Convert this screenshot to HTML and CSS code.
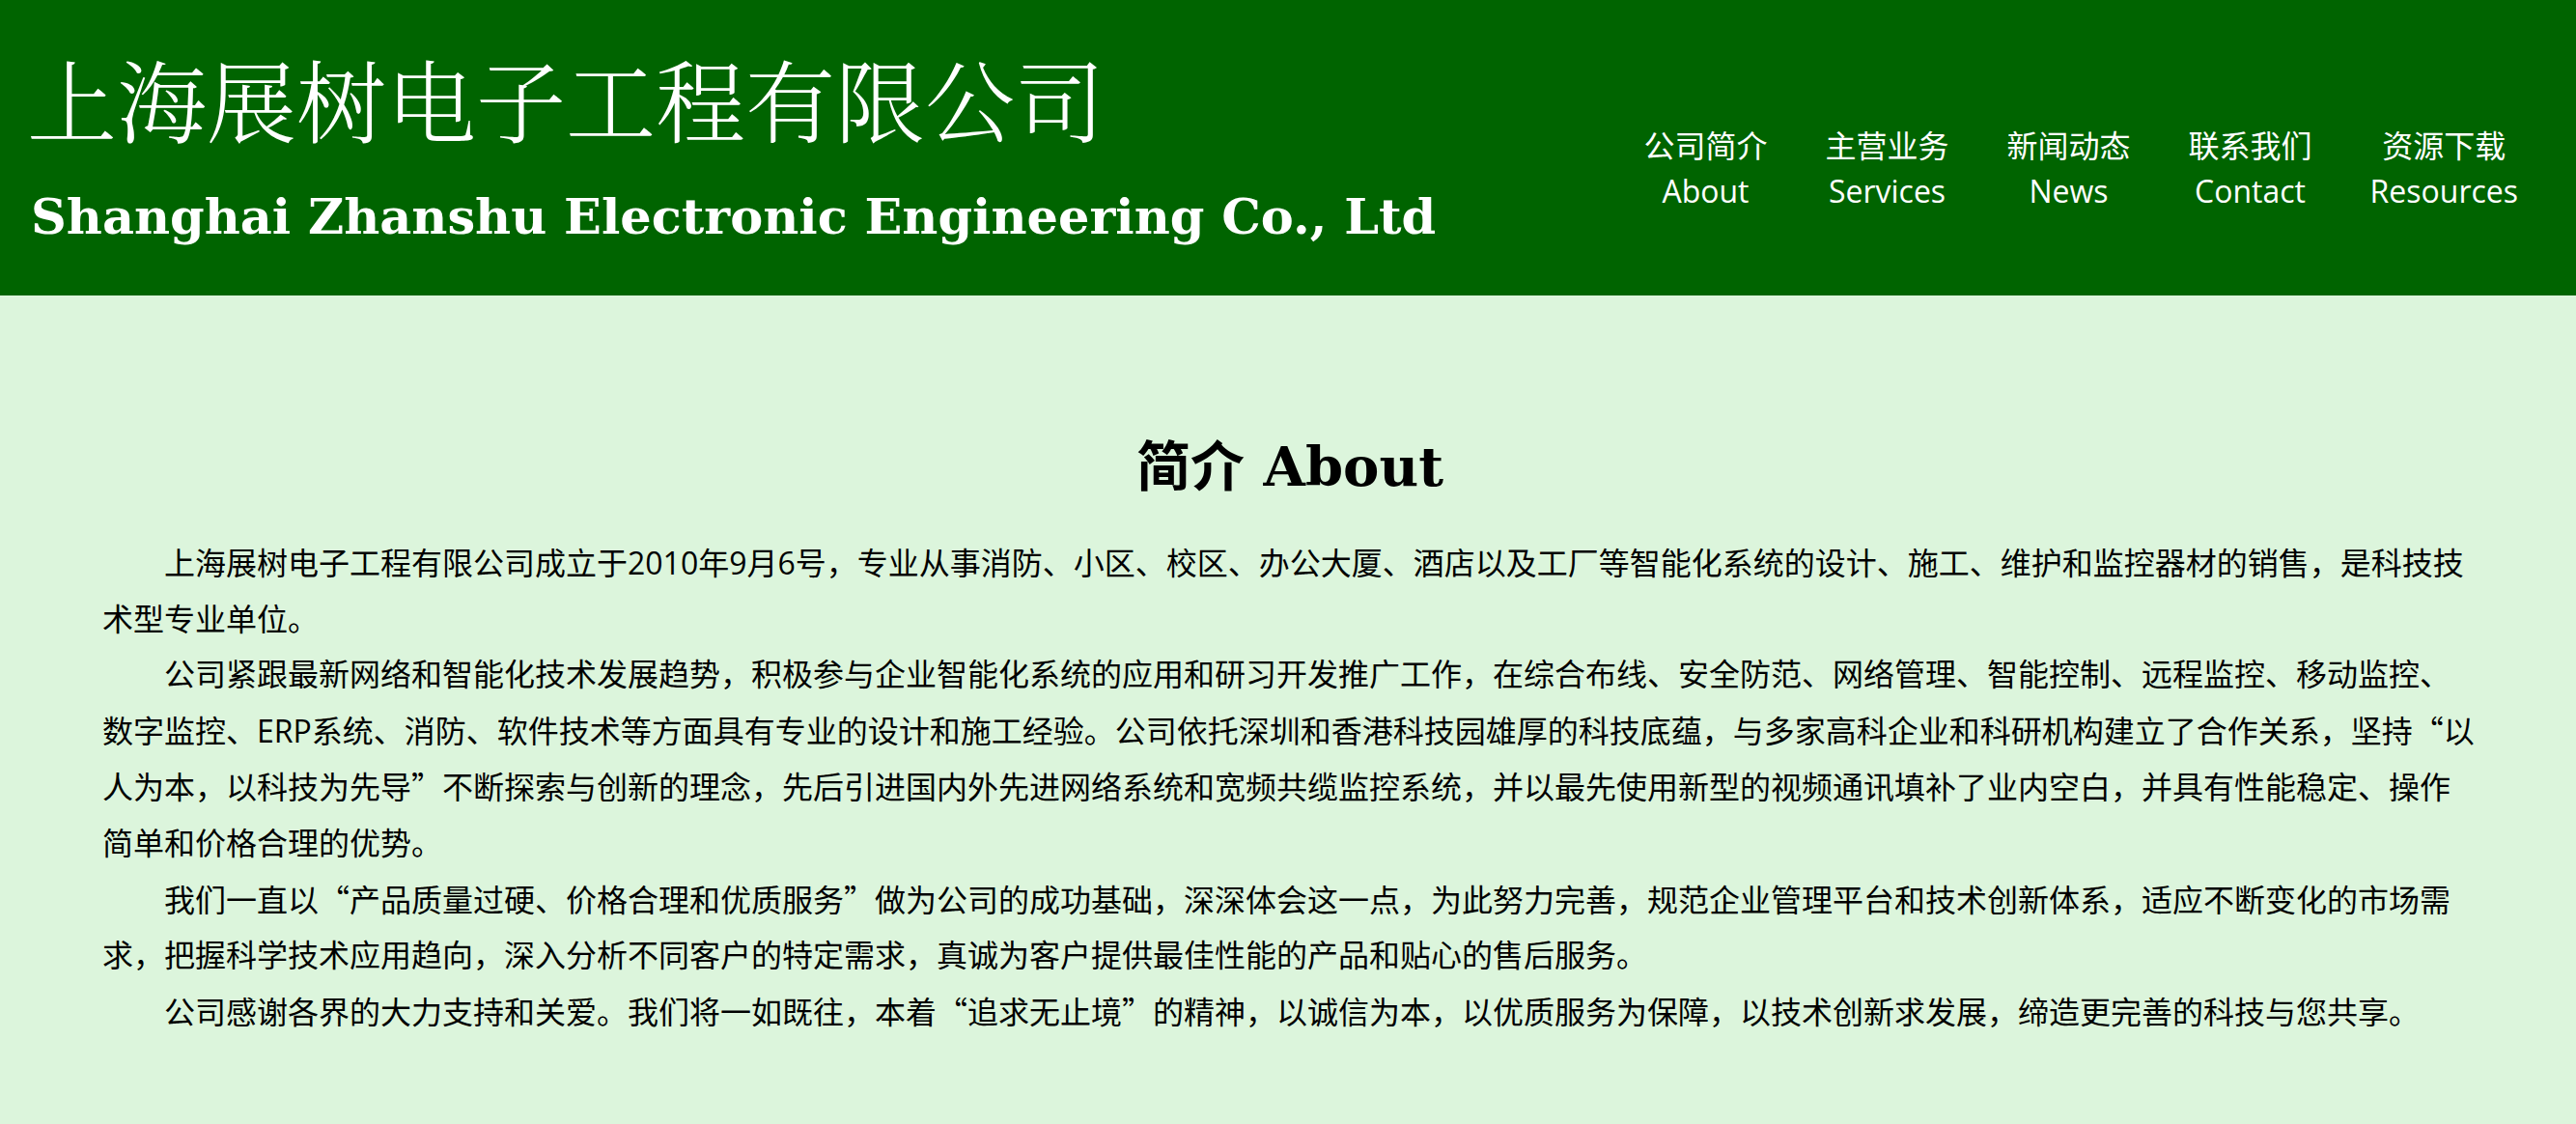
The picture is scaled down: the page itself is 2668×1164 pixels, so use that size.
FILE: index.html
```html
<!DOCTYPE html>
<html lang="zh-CN">
<head>
<meta charset="utf-8">
<title>上海展树电子工程有限公司</title>
<link rel="stylesheet" href="styles.css">
</head>
<body>
<header class="site-header">
  <div class="brand">
    <h1 class="brand-cn">上海展树电子工程有限公司</h1>
    <div class="brand-en">Shanghai Zhanshu Electronic Engineering Co., Ltd</div>
  </div>
  <nav class="nav">
    <a class="nav-item" href="#"><span>公司简介</span><span>About</span></a>
    <a class="nav-item" href="#"><span>主营业务</span><span>Services</span></a>
    <a class="nav-item" href="#"><span>新闻动态</span><span>News</span></a>
    <a class="nav-item" href="#"><span>联系我们</span><span>Contact</span></a>
    <a class="nav-item" href="#"><span>资源下载</span><span>Resources</span></a>
  </nav>
</header>
<main class="content">
  <h2 class="section-title">简介 About</h2>
  <p>上海展树电子工程有限公司成立于2010年9月6号，专业从事消防、小区、校区、办公大厦、酒店以及工厂等智能化系统的设计、施工、维护和监控器材的销售，是科技技术型专业单位。</p>
  <p>公司紧跟最新网络和智能化技术发展趋势，积极参与企业智能化系统的应用和研习开发推广工作，在综合布线、安全防范、网络管理、智能控制、远程监控、移动监控、数字监控、ERP系统、消防、软件技术等方面具有专业的设计和施工经验。公司依托深圳和香港科技园雄厚的科技底蕴，与多家高科企业和科研机构建立了合作关系，坚持<span class="q">“</span>以人为本，以科技为先导<span class="q">”</span>不断探索与创新的理念，先后引进国内外先进网络系统和宽频共缆监控系统，并以最先使用新型的视频通讯填补了业内空白，并具有性能稳定、操作简单和价格合理的优势。</p>
  <p>我们一直以<span class="q">“</span>产品质量过硬、价格合理和优质服务<span class="q">”</span>做为公司的成功基础，深深体会这一点，为此努力完善，规范企业管理平台和技术创新体系，适应不断变化的市场需求，把握科学技术应用趋向，深入分析不同客户的特定需求，真诚为客户提供最佳性能的产品和贴心的售后服务。</p>
  <p>公司感谢各界的大力支持和关爱。我们将一如既往，本着<span class="q">“</span>追求无止境<span class="q">”</span>的精神，以诚信为本，以优质服务为保障，以技术创新求发展，缔造更完善的科技与您共享。</p>
</main>
</body>
</html>
```
FILE: styles.css
```css
html, body {
  margin: 0;
  padding: 0;
}
body {
  background: #dcf5dc;
  color: #000;
  font-family: "Open Sans", "Noto Sans CJK SC", sans-serif;
  min-height: 1164px;
}
.site-header {
  background: #006400;
  height: 306px;
  box-sizing: border-box;
  display: flex;
  justify-content: space-between;
  align-items: flex-start;
  padding: 0 60px 0 28px;
  color: #fff;
}
.brand {
  padding-top: 41px;
}
.brand-cn {
  margin: 0;
  font-family: "Noto Serif CJK SC", "Noto Sans CJK SC", serif;
  font-weight: 300;
  font-size: 93px;
  line-height: 120px;
  letter-spacing: 0;
}
.brand-en {
  margin: 31px 0 0 4px;
  font-family: "DejaVu Serif", serif;
  font-weight: bold;
  font-size: 51px;
  line-height: 64px;
  white-space: nowrap;
}
.nav {
  display: flex;
  gap: 60px;
  padding-top: 127px;
}
.nav-item {
  display: flex;
  flex-direction: column;
  align-items: center;
  color: #fff;
  text-decoration: none;
  font-size: 32px;
  line-height: 47px;
}
.content {
  padding: 0 102px 0 106px;
}
.section-title {
  margin: 144px 0 38px;
  text-align: center;
  font-family: "DejaVu Serif", "Noto Sans CJK SC", serif;
  font-weight: bold;
  font-size: 56px;
  line-height: 66px;
}
.content p {
  margin: 0;
  text-indent: 2em;
  font-size: 32px;
  line-height: 57.6px;
}
.q {
  font-family: "Noto Sans CJK SC", sans-serif;
}
```
